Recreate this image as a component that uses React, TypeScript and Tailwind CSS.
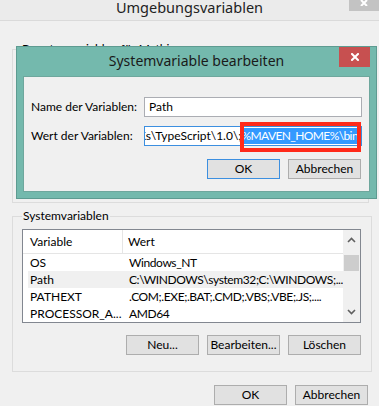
import React from "react";

const font = { fontFamily: '"Segoe UI", Lato, "Noto Sans", "Liberation Sans", sans-serif' };
const titleFont = { fontFamily: '"Segoe UI", "Noto Sans", "Liberation Sans", sans-serif' };

function Btn({ label, primary = false }: { label: string; primary?: boolean }) {
  return (
    <div
      className={
        "w-[73px] h-[20px] flex items-center justify-center text-[12px] text-black bg-[#e1e1e1] border " +
        (primary ? "border-[#3c8fe0]" : "border-[#adadad]")
      }
    >
      {label}
    </div>
  );
}

function XIcon({ size = 8, stroke = 2 }: { size?: number; stroke?: number }) {
  return (
    <svg width={size} height={size} viewBox="0 0 8 8">
      <path d="M1 1 L7 7 M7 1 L1 7" stroke="white" strokeWidth={stroke} strokeLinecap="square" />
    </svg>
  );
}

export default function App() {
  const rows = [
    { v: "OS", w: "Windows_NT", sel: false },
    { v: "Path", w: "C:\\WINDOWS\\system32;C:\\WINDOWS;...", sel: true },
    { v: "PATHEXT", w: ".COM;.EXE;.BAT;.CMD;.VBS;.VBE;.JS;....", sel: false },
    { v: "PROCESSOR_A...", w: "AMD64", sel: false },
  ];
  return (
    <div className="relative w-[379px] h-[406px] overflow-hidden bg-[#f0f0f0] text-black" style={font}>
      {/* outer title bar */}
      <div className="relative h-[21px] bg-[#ebebeb] border-b border-[#dadada] flex justify-center" style={titleFont}>
        <span className="text-[14.5px] leading-[15px] mt-[0px] text-[#222]">Umgebungsvariablen</span>
        <div className="absolute right-0 top-0 w-[30px] h-[11px] bg-[#c3c3c3] flex items-start justify-center">
          <svg width="8" height="6" viewBox="0 0 8 6">
            <path d="M1 0 L7 6 M7 0 L1 6" stroke="white" strokeWidth="2" />
          </svg>
        </div>
      </div>

      {/* body */}
      <div className="pl-[12px] pr-[10px] flex flex-col">
        <fieldset className="mt-[21px] h-[161px] border border-[#dcdcdc] px-[8px]">
          <legend className="text-[12px] px-[1px] leading-[14px]">Benutzervariablen für Mathias</legend>
        </fieldset>

        <fieldset className="mt-[6px] h-[163px] border border-[#dcdcdc] pl-[9px] pr-[10px] flex flex-col">
          <legend className="text-[12px] leading-[14px] px-[1px]">Systemvariablen</legend>
          <div className="mt-[6px] h-[94px] border border-[#828790] bg-white flex">
            <div className="flex-1 flex flex-col">
              <div className="h-[25px] flex items-center text-[12px] border-b border-[#e5e5e5]">
                <div className="w-[100px] pl-[7px] h-full flex items-center border-r border-[#e5e5e5]">Variable</div>
                <div className="pl-[5px]">Wert</div>
              </div>
              {rows.map((r) => (
                <div
                  key={r.v}
                  className={
                    "h-[17px] ml-[5px] flex items-center text-[12px] whitespace-nowrap " +
                    (r.sel ? "bg-[#f0f0f0]" : "")
                  }
                >
                  <div className="w-[101px] pl-[2px]">{r.v}</div>
                  <div className="tracking-[-0.4px]">{r.w}</div>
                </div>
              ))}
            </div>
            <div className="w-[17px] bg-[#f0f0f0] flex flex-col items-center">
              <svg width="9" height="6" viewBox="0 0 9 6" className="mt-[7px]">
                <path d="M1 5 L4.5 1.5 L8 5" stroke="#606060" strokeWidth="1.6" fill="none" />
              </svg>
              <div className="mt-[12px] w-[15px] h-[16px] bg-[#cdcdcd]" />
              <div className="flex-1" />
              <svg width="9" height="6" viewBox="0 0 9 6" className="mb-[7px]">
                <path d="M1 1 L4.5 4.5 L8 1" stroke="#606060" strokeWidth="1.6" fill="none" />
              </svg>
            </div>
          </div>
          <div className="mt-[12px] flex justify-end gap-[8px]">
            <Btn label="Neu..." />
            <Btn label="Bearbeiten..." />
            <Btn label="Löschen" />
          </div>
        </fieldset>

        <div className="mt-[13px] pr-[1px] flex justify-end gap-[8px]">
          <Btn label="OK" />
          <Btn label="Abbrechen" />
        </div>
      </div>

      {/* dialog window */}
      <div className="absolute left-[16px] top-[46px] w-[361px] h-[153px] bg-[#74b9ad] border border-[#5e9b91] flex flex-col px-[6px] pb-[6px]">
        <div className="relative h-[29px] flex items-center justify-center" style={titleFont}>
          <span className="text-[14px] text-[#1a1a1a] leading-none -mt-[2px]">Systemvariable bearbeiten</span>
          <div className="absolute right-[0px] top-[0px] w-[31px] h-[20px] bg-[#c75050] flex items-center justify-center">
            <XIcon />
          </div>
        </div>
        <div className="flex-1 bg-[#f0f0f0] border border-[#6ea79d] px-[7px] pt-[20px] flex flex-col">
          <div className="flex items-center h-[20px]">
            <div className="w-[113px] text-[12px] whitespace-nowrap">Name der Variablen:</div>
            <div className="w-[218px] h-[20px] border border-[#abadb3] bg-white flex items-center pl-[4px] text-[12px]">
              Path
            </div>
          </div>
          <div className="flex items-center h-[20px] mt-[9px]">
            <div className="w-[113px] text-[12px] whitespace-nowrap">Wert der Variablen:</div>
            <div className="relative w-[218px] h-[20px] border border-[#3c8fe0] bg-white flex items-center justify-end overflow-hidden pr-[3px] text-[12px] whitespace-nowrap">
              <span>C:\Program Files (x86)\Microsoft SDKs\TypeScript\1.0\;</span>
              <span className="bg-[#3399ff] text-white leading-[16px] tracking-[-0.6px]">%MAVEN_HOME%\bin</span>
            </div>
          </div>
          <div className="mt-[13px] flex justify-end gap-[8px] pr-[1px]">
            <Btn label="OK" primary />
            <Btn label="Abbrechen" />
          </div>
        </div>
      </div>

      {/* red annotation box */}
      <div className="absolute left-[240px] top-[122px] w-[121px] h-[30px] border-[4px] border-[#ff2a1a]" />
    </div>
  );
}
